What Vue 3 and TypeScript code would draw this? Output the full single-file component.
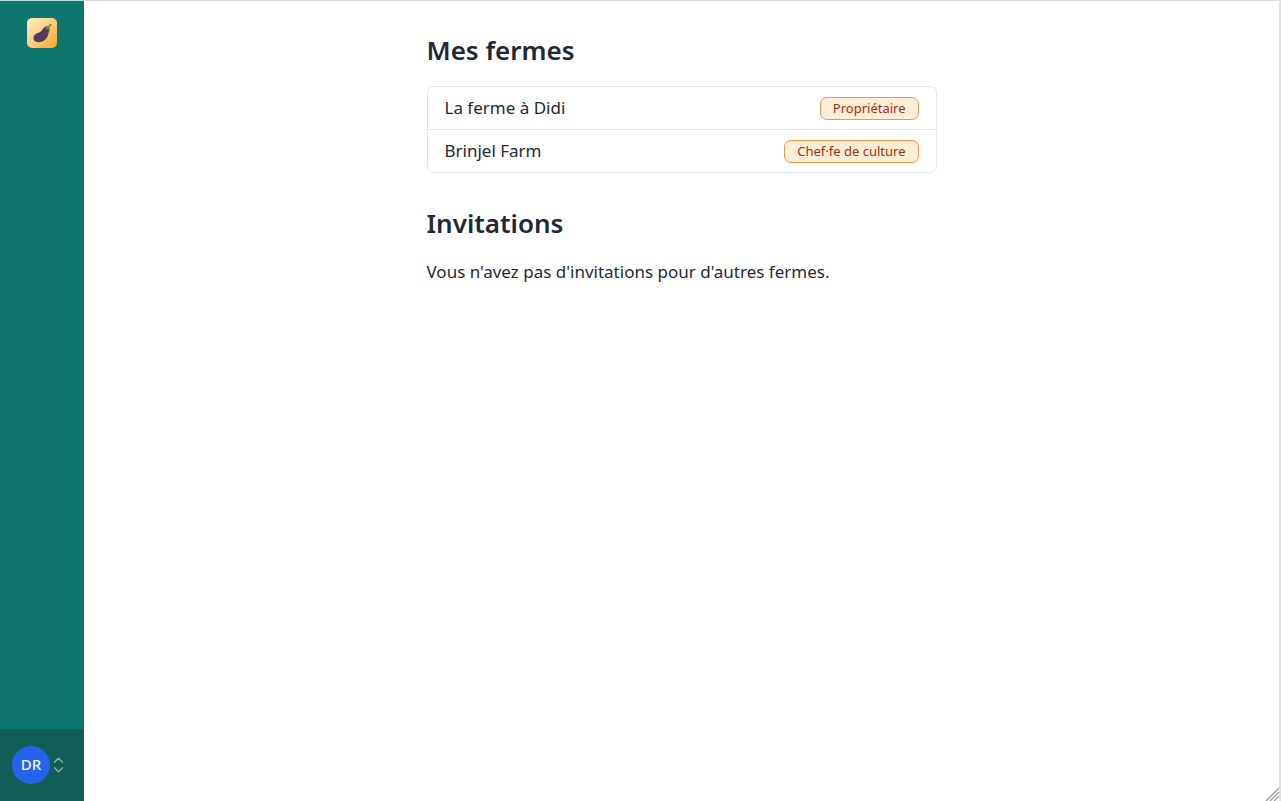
<script setup lang="ts">
interface Farm {
  name: string
  role: string
}

const farms: Farm[] = [
  { name: 'La ferme à Didi', role: 'Propriétaire' },
  { name: 'Brinjel Farm', role: 'Chef·fe de culture' },
]
</script>

<template>
  <div class="frame">
    <aside class="sidebar">
      <a class="logo" href="#" aria-label="Brinjel">
        <svg width="30" height="30" viewBox="0 0 30 30" aria-hidden="true">
          <defs>
            <linearGradient id="logo-bg" x1="0" y1="0" x2="1" y2="1">
              <stop offset="0" stop-color="#fdeccb" />
              <stop offset="0.5" stop-color="#fdcf7c" />
              <stop offset="1" stop-color="#fca51f" />
            </linearGradient>
          </defs>
          <rect width="30" height="30" rx="5" fill="url(#logo-bg)" />
          <path
            d="M18.4 8.8C16.6 9.6 15.7 11.3 14.3 13C12.7 14.9 10.5 14.6 8.4 16.2C6 18.1 5.9 21.4 8 23.2C10.6 25.3 15.5 24.4 18.6 21.3C21.3 18.6 21.3 15.4 22.3 12.4C21.7 10.5 20.3 9.2 18.4 8.8Z"
            fill="#533b61"
          />
          <path
            d="M17.2 9.4C18.2 8.2 19.8 7.8 21.2 8.3L23.2 6L24.4 6.7L22.4 9.3C23.2 10.4 23.1 12.1 22.3 13.5L21 11.5L19.7 11.8L19.5 10.2Z"
            fill="#658d35"
          />
          <path d="M22.7 6.9L24.2 5.9L24.6 6.8L23.5 7.7Z" fill="#6b6538" />
        </svg>
      </a>
      <button class="account" type="button" aria-label="Compte DR">
        <span class="avatar">DR</span>
        <svg class="chevrons" width="11" height="17" viewBox="0 0 11 17" aria-hidden="true">
          <path d="M1.5 5.3L5.5 1.3L9.5 5.3M1.5 10.7L5.5 14.7L9.5 10.7" />
        </svg>
      </button>
    </aside>

    <main class="main">
      <div class="content">
        <section>
          <h1>Mes fermes</h1>
          <ul class="farms">
            <li v-for="farm in farms" :key="farm.name">
              <a class="farm" href="#">
                <span>{{ farm.name }}</span>
                <span class="badge">{{ farm.role }}</span>
              </a>
            </li>
          </ul>
        </section>
        <section>
          <h1>Invitations</h1>
          <p>Vous n'avez pas d'invitations pour d'autres fermes.</p>
        </section>
      </div>
    </main>

    <svg class="grip" width="14" height="14" viewBox="0 0 14 14" aria-hidden="true">
      <path d="M1 14L14 1M5 14L14 5M9 14L14 9" />
    </svg>
  </div>
</template>

<style>
body {
  margin: 0;
}
</style>

<style scoped>
.frame {
  position: relative;
  box-sizing: border-box;
  display: flex;
  min-height: 100vh;
  border-right: 2px solid #e2e2e2;
  background: #fff;
  color: #1f2937;
  font-family: "Noto Sans", sans-serif;
  font-size: 17px;
  line-height: 26px;
}

.sidebar {
  box-sizing: border-box;
  display: flex;
  flex: none;
  flex-direction: column;
  justify-content: space-between;
  width: 84px;
  border-top: 1px solid #b9e0dc;
  background: #0f766e;
}

.logo {
  display: flex;
  justify-content: center;
  padding: 17px 0;
}

.account {
  display: flex;
  align-items: center;
  gap: 3px;
  padding: 17px 12px;
  border: 0;
  background: #115e59;
  font-family: inherit;
  cursor: pointer;
}

.avatar {
  box-sizing: border-box;
  display: flex;
  align-items: center;
  justify-content: center;
  width: 38px;
  height: 38px;
  padding-bottom: 2px;
  border-radius: 50%;
  background: #2563eb;
  color: #f1f5fe;
  font-size: 15px;
  font-weight: 500;
  line-height: 20px;
}

.chevrons path {
  fill: none;
  stroke: #8fb1ae;
  stroke-width: 1.3;
  stroke-linecap: round;
  stroke-linejoin: round;
}

.main {
  flex: 1;
  padding: 32px 16px;
  border-top: 1px solid #dadada;
}

.content {
  display: flex;
  flex-direction: column;
  gap: 33px;
  max-width: 510px;
  margin: 0 auto;
}

h1 {
  margin: 0 0 19px;
  font-size: 26px;
  font-weight: 600;
  line-height: 34px;
}

.farms {
  margin: 0;
  padding: 0;
  border: 1px solid #e5e7eb;
  border-radius: 7px;
  list-style: none;
}

.farms li + li {
  border-top: 1px solid #e5e7eb;
}

.farm {
  display: flex;
  align-items: center;
  justify-content: space-between;
  padding: 8px 17px;
  color: inherit;
  text-decoration: none;
}

.badge {
  padding: 1px 12px;
  border: 1px solid #e8994c;
  border-radius: 7px;
  background: #ffedd5;
  color: #9a3412;
  font-size: 13px;
  line-height: 19px;
}

p {
  margin: 0;
}

.grip {
  position: absolute;
  right: 0;
  bottom: 0;
}

.grip path {
  fill: none;
  stroke: #a0a0a0;
  stroke-width: 1.4;
}
</style>
